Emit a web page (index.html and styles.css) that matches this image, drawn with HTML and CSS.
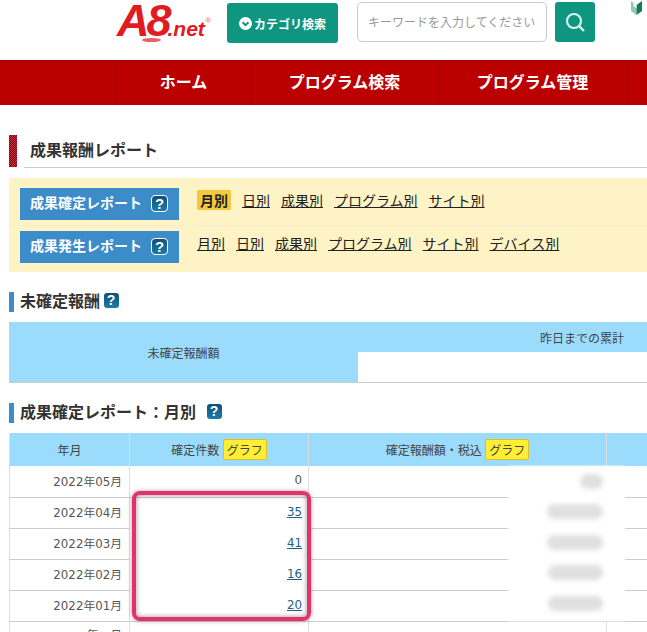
FILE: index.html
```html
<!DOCTYPE html>
<html lang="ja">
<head>
  <meta charset="UTF-8" />
  <title>成果報酬レポート</title>
  <link rel="stylesheet" href="styles.css">
</head>
<body>

  <header class="top">
    <a class="logo"><span class="logo-a8">A8</span><span class="logo-net">.net</span><span class="logo-r">®</span></a>
    <a class="cat-btn">
      <svg width="13" height="13" viewBox="0 0 13 13"><circle cx="6.5" cy="6.5" r="6.5" fill="#fff"/><path d="M3.5 5.2l3 3 3-3" fill="none" stroke="#0f9680" stroke-width="2"/></svg>
      カテゴリ検索
    </a>
    <div class="search-box">キーワードを入力してください</div>
    <a class="search-btn">
      <svg width="24" height="24" viewBox="0 0 24 24"><circle cx="11" cy="11" r="7" fill="none" stroke="#d8f3ec" stroke-width="2.2"/><path d="M16 16l5 5" stroke="#d8f3ec" stroke-width="2.4"/></svg>
    </a>
    <svg class="leaf" width="11" height="14" viewBox="0 0 11 14"><path d="M0 0l5.5 4v10L0 10z" fill="#8ccfb0"/><path d="M11 0L5.5 4v10L11 10z" fill="#137a5c"/><path d="M5.5 4L2.5 1.5v3l3 3z" fill="#fff"/></svg>
  </header>

  <nav class="main-nav">
    <a class="nav-home">ホーム</a>
    <a class="nav-search">プログラム検索</a>
    <a class="nav-manage">プログラム管理</a>
  </nav>

  <main class="content">
    <h1 class="page-title">成果報酬レポート</h1>

    <div class="report-box">
      <div class="report-row">
        <div class="report-label">成果確定レポート <span class="help help-lg">?</span></div>
        <div class="report-links">
          <a class="current">月別</a><a>日別</a><a>成果別</a><a>プログラム別</a><a>サイト別</a>
        </div>
      </div>
      <div class="report-row">
        <div class="report-label">成果発生レポート <span class="help help-lg">?</span></div>
        <div class="report-links">
          <a>月別</a><a>日別</a><a>成果別</a><a>プログラム別</a><a>サイト別</a><a>デバイス別</a>
        </div>
      </div>
    </div>

    <h2 class="sub-title">未確定報酬 <span class="help">?</span></h2>
    <table class="pending">
      <tr>
        <th rowspan="2" class="pending-name">未確定報酬額</th>
        <th class="pending-head">昨日までの累計</th>
      </tr>
      <tr><td></td></tr>
    </table>

    <h2 class="sub-title second">成果確定レポート：月別 <span class="help help-gap">?</span></h2>
    <div class="monthly-wrap">
      <table class="monthly">
        <tr>
          <th class="col-month">年月</th>
          <th class="col-count">確定件数 <span class="graph">グラフ</span></th>
          <th class="col-amount">確定報酬額・税込 <span class="graph">グラフ</span></th>
          <th></th>
        </tr>
        <tr><td class="num">2022年05月</td><td class="num">0</td><td></td><td></td></tr>
        <tr><td class="num">2022年04月</td><td class="num clean"><a>35</a></td><td></td><td></td></tr>
        <tr><td class="num">2022年03月</td><td class="num clean"><a>41</a></td><td></td><td></td></tr>
        <tr><td class="num">2022年02月</td><td class="num clean"><a>16</a></td><td></td><td></td></tr>
        <tr><td class="num">2022年01月</td><td class="num"><a>20</a></td><td></td><td></td></tr>
        <tr class="last-row"><td class="num">年　月</td><td></td><td class="num">一</td><td></td></tr>
      </table>
      <!-- blurred amounts -->
      <div class="mask"></div>
      <span class="smear s1"></span>
      <span class="smear s2"></span>
      <span class="smear s3"></span>
      <span class="smear s4"></span>
      <span class="smear s5"></span>
      <div class="highlight"></div>
    </div>
  </main>

</body>
</html>
```

FILE: styles.css
```css
/* Reset and base */
* { margin: 0; padding: 0; box-sizing: border-box; }
html, body { height: 632px; overflow: hidden; }
body {
  font-family: "Noto Sans CJK JP", sans-serif;
  font-size: 12px;
  color: #333;
  background: #fff;
}
a { cursor: pointer; }

/* Header */
.top {
  position: relative;
  height: 60px;
  padding: 2px 0 0 117px;
  display: flex;
  align-items: flex-start;
}
.logo {
  position: relative;
  flex: none;
  width: 110px;
  height: 42px;
  display: flex;
  align-items: baseline;
  color: #e21a22;
  font-family: "Liberation Sans", sans-serif;
  font-weight: bold;
  font-style: italic;
  line-height: 37px;
}
.logo::after {
  content: "";
  position: absolute;
  left: 25px;
  top: 36px;
  width: 19px;
  height: 4px;
  border-radius: 50%;
  background: #e8606a;
}
.logo-a8 { font-size: 45px; letter-spacing: -3px; }
.logo-net { font-size: 21px; margin-left: -1px; }
.logo-r { font-size: 8px; color: #e88; align-self: flex-start; line-height: 38px; }
.cat-btn {
  width: 111px;
  height: 40px;
  margin-top: 1px;
  background: #0f9680;
  border-radius: 3px;
  color: #fff;
  font-size: 12px;
  font-weight: bold;
  display: flex;
  align-items: center;
  justify-content: center;
  gap: 2px;
}
.search-box {
  width: 190px;
  height: 40px;
  margin-left: 19px;
  border: 1px solid #ccc;
  border-radius: 5px;
  color: #999;
  font-size: 12px;
  line-height: 38px;
  padding-left: 10px;
  white-space: nowrap;
  overflow: hidden;
}
.search-btn {
  width: 40px;
  height: 40px;
  margin-left: 8px;
  background: #0f9680;
  border-radius: 3px;
  display: flex;
  align-items: center;
  justify-content: center;
}
.leaf { position: absolute; top: 1px; left: 631px; }

/* Navigation */
.main-nav {
  height: 45px;
  background: #bb0000;
  border-top: 1px solid #a00000;
  display: grid;
  grid-template-columns: 134px 188px 188px 21px;
  padding-left: 116px;
}
.main-nav a {
  color: #fff;
  font-size: 16px;
  font-weight: bold;
  line-height: 41px;
  text-align: center;
  border-left: 1px solid #a80000;
}
.main-nav::after {
  content: "";
  border-left: 1px solid #a80000;
}

/* Content */
.content { padding: 30px 0 0 9px; }
.page-title {
  height: 33px;
  font-size: 16px;
  font-weight: bold;
  line-height: 29px;
  padding-left: 21px;
  position: relative;
  color: #333;
}
.page-title::before {
  content: "";
  position: absolute;
  left: 0;
  top: 0;
  width: 8px;
  height: 32px;
  background: conic-gradient(#7d0010 25%, #d0303c 0 50%, #7d0010 0 75%, #d0303c 0) 0 0 / 2px 2px;
}
.page-title::after {
  content: "";
  position: absolute;
  left: 15px;
  right: 0;
  bottom: 0;
  border-bottom: 1px solid #ccc;
}

.report-box {
  margin-top: 10px;
  height: 94px;
  background: #fdf3c5;
  padding: 10px 0 0 11px;
}
.report-row { display: flex; align-items: center; height: 32px; }
.report-row + .report-row {
  margin-top: 11px;
  position: relative;
}
.report-row + .report-row::before {
  content: "";
  position: absolute;
  top: -6px;
  left: -11px;
  right: 0;
  border-top: 1px solid #f5ecca;
}
.report-label {
  width: 159px;
  height: 32px;
  background: #3d8cca;
  color: #fff;
  font-weight: bold;
  font-size: 14px;
  padding: 0 0 4px 10px;
  display: flex;
  align-items: center;
  gap: 9px;
}
.report-links {
  display: flex;
  align-items: center;
  gap: 11px;
  margin-left: 18px;
  margin-top: -8px;
  font-size: 14px;
}
.report-links a { color: #222; text-decoration: underline; }
.report-links a.current {
  background: #f3c93f;
  font-weight: bold;
  text-decoration: none;
  padding: 0 3px;
  line-height: 20px;
}

.help {
  display: inline-block;
  width: 15px;
  height: 15px;
  background: linear-gradient(#0e4f78, #1c7cab);
  color: #fff;
  border-radius: 3px;
  font-family: "Liberation Sans", sans-serif;
  font-size: 14px;
  font-weight: bold;
  line-height: 15px;
  text-align: center;
  vertical-align: 2px;
}
.help-lg {
  flex: none;
  width: 17px;
  height: 17px;
  font-size: 15px;
  line-height: 15px;
  border: 1px solid #fff;
  border-radius: 4px;
  margin-top: 3px;
}
.help-gap { margin-left: 7px; }

.sub-title {
  margin-top: 20px;
  height: 20px;
  border-left: 5px solid #3d8cca;
  padding-left: 6px;
  font-size: 16px;
  font-weight: bold;
  line-height: 17px;
  color: #333;
}

/* Tables */
table { border-collapse: collapse; width: 638px; table-layout: fixed; }
th { background: #9bdcfd; font-weight: normal; color: #444; }

.pending { margin-top: 10px; height: 61px; border-bottom: 1px solid #ccc; }
.pending-name { width: 349px; }
.pending-head { height: 30px; text-align: right; padding-right: 23px; }

.monthly-wrap { position: relative; margin-top: 10px; }
.monthly th { height: 33px; }
.monthly td { height: 31px; border-bottom: 1px solid #ccc; color: #555; padding-bottom: 2px; }
.monthly td, .monthly th { border-left: 1px solid #ddd; }
.monthly .col-month { width: 120px; }
.monthly .col-count { width: 179px; }
.monthly .col-amount { width: 298px; }
.monthly .num {
  text-align: right;
  padding-right: 7px;
  font-family: "DejaVu Sans", "Noto Sans CJK JP", sans-serif;
  font-size: 11.8px;
}
.monthly td:nth-child(2).num { padding-right: 6px; }
.monthly td a { color: #23607f; text-decoration: underline; }
.monthly td.clean { border-bottom-color: #fff; }
.monthly .last-row td { padding-bottom: 6px; }

.graph {
  display: inline-block;
  background: #ffee33;
  color: #444;
  border: 1px solid #d8c030;
  border-radius: 2px;
  padding: 0 3px;
  line-height: 19px;
  margin-left: 1px;
}

/* Blur over the amounts */
.mask {
  position: absolute;
  top: 33px;
  left: 499px;
  width: 117px;
  height: 155px;
  background: #fff;
  filter: blur(1px);
}
.smear {
  position: absolute;
  height: 15px;
  background: #e0e0e0;
  border-radius: 8px;
  filter: blur(2.5px);
}
.s1 { top: 41px; left: 571px; width: 23px; }
.s2 { top: 71px; left: 538px; width: 56px; }
.s3 { top: 102px; left: 538px; width: 56px; }
.s4 { top: 132px; left: 539px; width: 55px; }
.s5 { top: 163px; left: 539px; width: 55px; }

.highlight {
  position: absolute;
  top: 58px;
  left: 123px;
  width: 179px;
  height: 130px;
  border: 4px solid #e0336b;
  border-radius: 8px;
  box-shadow: 0 0 4px rgba(120, 60, 80, 0.5), inset 0 0 5px rgba(90, 60, 70, 0.6);
}
```
